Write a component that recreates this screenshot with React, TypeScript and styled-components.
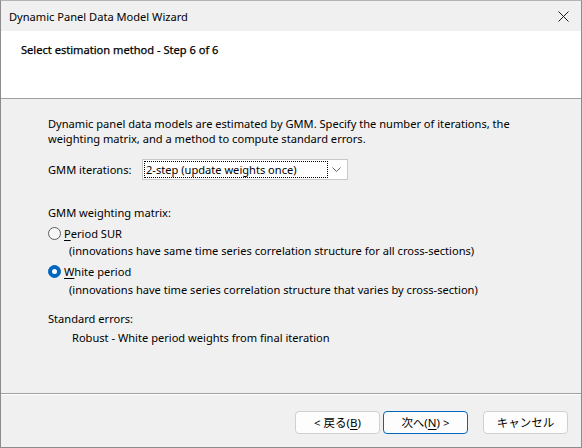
import styled, { createGlobalStyle } from 'styled-components';

const GlobalStyle = createGlobalStyle`
  html, body {
    margin: 0;
    padding: 0;
    background: #f0f0f0;
  }
  body {
    font-family: "Noto Sans", "Noto Sans CJK JP", sans-serif;
    font-size: 11.1px;
    color: #000;
  }
`;

const Window = styled.div`
  width: 582px;
  height: 448px;
  box-sizing: border-box;
  border: 1px solid #8c8c8c;
  border-top-color: #b4b4b4;
  background: #f0f0f0;
  display: flex;
  flex-direction: column;
  overflow: hidden;
`;

const TitleBar = styled.div`
  height: 30px;
  flex: none;
  display: flex;
  align-items: center;
  justify-content: space-between;
  padding: 0 10px 0 8px;
  background: #f0f0f0;
`;

const Title = styled.span`
  line-height: 15px;
`;

const CloseButton = styled.button`
  width: 16px;
  height: 16px;
  padding: 0;
  border: none;
  background: transparent;
  display: flex;
  align-items: center;
  justify-content: center;
`;

const Header = styled.div`
  height: 68px;
  flex: none;
  box-sizing: border-box;
  background: #fff;
  border-bottom: 1px solid #a0a0a0;
  padding: 11px 0 0 20px;
`;

const HeaderText = styled.div`
  line-height: 15px;
  -webkit-text-stroke: 0.25px #000;
`;

const Body = styled.div`
  flex: 1;
  padding: 17px 0 0 47px;
  display: flex;
  flex-direction: column;
`;

const Line = styled.div<{ $indent?: number; $gap?: number }>`
  line-height: 15px;
  white-space: nowrap;
  padding-left: ${(p) => p.$indent ?? 0}px;
  margin-top: ${(p) => p.$gap ?? 0}px;
`;

const FieldRow = styled.div`
  display: flex;
  align-items: center;
  margin-top: 13px;
`;

const FieldLabel = styled.span`
  width: 94px;
  flex: none;
  line-height: 15px;
`;

const Select = styled.div`
  width: 206px;
  height: 21px;
  box-sizing: border-box;
  border: 1px solid #c8c8c8;
  background: #fff;
  display: flex;
  align-items: center;
  padding: 1px;
`;

const SelectValue = styled.span`
  flex: 1;
  height: 17px;
  line-height: 15px;
  box-sizing: border-box;
  border: 1px dotted #000;
  margin-right: 2px;
  padding-left: 1px;
`;

const Chevron = styled.span`
  width: 13px;
  display: flex;
  justify-content: center;
  margin-right: 3px;
`;

const RadioRow = styled.label`
  display: flex;
  align-items: center;
  gap: 3px;
  margin-top: 6px;
  line-height: 15px;
`;

const Radio = styled.span<{ $checked?: boolean }>`
  width: 13px;
  height: 13px;
  box-sizing: border-box;
  border-radius: 50%;
  flex: none;
  display: flex;
  align-items: center;
  justify-content: center;
  border: 1px solid ${(p) => (p.$checked ? '#0067c0' : '#5f5f5f')};
  background: ${(p) => (p.$checked ? '#0067c0' : '#f7f7f7')};

  &::after {
    content: '';
    display: ${(p) => (p.$checked ? 'block' : 'none')};
    width: 5px;
    height: 5px;
    border-radius: 50%;
    background: #fff;
  }
`;

const Mnemonic = styled.span`
  text-decoration: underline;
  text-underline-offset: 2px;
`;

const Footer = styled.div`
  height: 54px;
  flex: none;
  box-sizing: border-box;
  border-top: 1px solid #a0a0a0;
  box-shadow: inset 0 1px 0 #fff;
  display: flex;
  justify-content: flex-end;
  align-items: flex-start;
  padding: 17px 13px 0 0;
`;

const Button = styled.button<{ $default?: boolean; $gap?: number }>`
  width: 85px;
  height: 23px;
  box-sizing: border-box;
  margin-left: ${(p) => p.$gap ?? 0}px;
  border: 1px solid ${(p) => (p.$default ? '#0067c0' : '#d0d0d0')};
  border-radius: 4px;
  background: #fdfdfd;
  font-family: "Noto Sans", "Noto Sans CJK JP", sans-serif;
  font-size: 11.5px;
  line-height: 15px;
  color: #000;
  padding: 0;
`;

const App = () => {
  return (
    <>
      <GlobalStyle />
      <Window>
        <TitleBar>
          <Title>Dynamic Panel Data Model Wizard</Title>
          <CloseButton aria-label="Close">
            <svg width="11" height="11" viewBox="0 0 11 11">
              <path d="M0.5 0.5 L10.5 10.5 M10.5 0.5 L0.5 10.5" stroke="#1a1a1a" strokeWidth="1" />
            </svg>
          </CloseButton>
        </TitleBar>

        <Header>
          <HeaderText>Select estimation method - Step 6 of 6</HeaderText>
        </Header>

        <Body>
          <Line>Dynamic panel data models are estimated by GMM. Specify the number of iterations, the</Line>
          <Line>weighting matrix, and a method to compute standard errors.</Line>

          <FieldRow>
            <FieldLabel>GMM iterations:</FieldLabel>
            <Select>
              <SelectValue>2-step (update weights once)</SelectValue>
              <Chevron>
                <svg width="9" height="5" viewBox="0 0 9 5">
                  <path d="M0.5 0.5 L4.5 4.5 L8.5 0.5" fill="none" stroke="#606060" strokeWidth="1" />
                </svg>
              </Chevron>
            </Select>
          </FieldRow>

          <Line $gap={25}>GMM weighting matrix:</Line>
          <RadioRow>
            <Radio />
            <span>
              <Mnemonic>P</Mnemonic>eriod SUR
            </span>
          </RadioRow>
          <Line $indent={21} $gap={2}>
            (innovations have same time series correlation structure for all cross-sections)
          </Line>
          <RadioRow>
            <Radio $checked />
            <span>
              <Mnemonic>W</Mnemonic>hite period
            </span>
          </RadioRow>
          <Line $indent={21} $gap={3}>
            (innovations have time series correlation structure that varies by cross-section)
          </Line>

          <Line $gap={14}>Standard errors:</Line>
          <Line $indent={24} $gap={4}>
            Robust - White period weights from final iteration
          </Line>
        </Body>

        <Footer>
          <Button>
            &lt; 戻る(<Mnemonic>B</Mnemonic>)
          </Button>
          <Button $default $gap={3}>
            次へ(<Mnemonic>N</Mnemonic>) &gt;
          </Button>
          <Button $gap={15}>キャンセル</Button>
        </Footer>
      </Window>
    </>
  );
};

export default App;
